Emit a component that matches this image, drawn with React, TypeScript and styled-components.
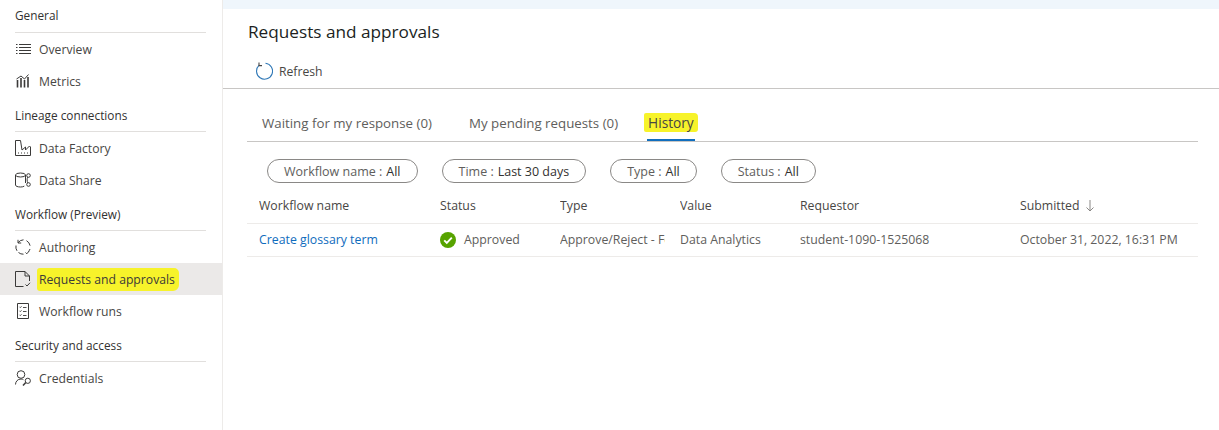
import React from 'react';
import styled, { createGlobalStyle } from 'styled-components';

const GlobalStyle = createGlobalStyle`
  html, body {
    margin: 0;
    padding: 0;
    background: #fff;
  }
  body {
    font-family: 'Open Sans', 'Noto Sans', 'Liberation Sans', sans-serif;
    font-size: 12px;
    color: #323130;
    overflow: hidden;
  }
`;

const Page = styled.div`
  display: flex;
  width: 1219px;
  height: 430px;
`;

const Sidebar = styled.nav`
  width: 223px;
  height: 430px;
  box-sizing: border-box;
  flex-shrink: 0;
  border-right: 1px solid #edebe9;
`;

const SectionTitle = styled.div`
  height: 35px;
  box-sizing: border-box;
  line-height: 20px;
  margin: 0 16px 0 15px;
  padding-top: 8px;
  border-bottom: 1px solid #e1dfdd;
  font-weight: 500;
  font-size: 11.8px;
  color: #323130;

  &:first-child {
    height: 33px;
    padding-top: 5px;
  }
`;

const NavItem = styled.div<{ $active?: boolean }>`
  display: flex;
  align-items: center;
  height: 32px;
  padding-left: 15px;
  gap: 8px;
  font-size: 12.2px;
  color: #484644;
  background: ${(p) => (p.$active ? '#ebe9e8' : 'transparent')};
`;

const IconSlot = styled.svg`
  width: 16px;
  height: 16px;
  flex-shrink: 0;
  fill: none;
  stroke: #3b3a39;
  stroke-width: 1;
`;

const Marker = styled.span`
  background: #f7f32a;
  color: #3b3a39;
  padding: 3px 4px 3px 2px;
  margin-left: -2px;
  border-radius: 3px 5px 6px 3px;
`;

const Main = styled.main`
  flex: 1;
  min-width: 0;
  display: flex;
  flex-direction: column;
`;

const TopStrip = styled.div`
  height: 9px;
  background: #eff6fc;
`;

const Header = styled.div`
  height: 80px;
  box-sizing: border-box;
  padding: 11px 0 0 25px;
  border-bottom: 1px solid #c8c6c4;
`;

const Title = styled.h1`
  margin: 0;
  font-size: 17.2px;
  line-height: 24px;
  font-weight: 500;
  color: #201f1e;
`;

const Toolbar = styled.div`
  display: flex;
  align-items: center;
  gap: 6px;
  margin: 17px 0 0 7px;
  height: 20px;
  font-size: 12.2px;
  color: #484644;
`;

const Content = styled.div`
  padding: 16px 21px 0 24px;
`;

const Tabs = styled.div`
  display: flex;
  height: 36px;
  padding-left: 15px;
  border-bottom: 1px solid #c8c6c4;
`;

const Tab = styled.div<{ $active?: boolean }>`
  position: relative;
  height: 36px;
  line-height: 36px;
  font-size: 13.3px;
  color: #605e5c;
  margin-right: 37px;
  ${(p) =>
    p.$active &&
    `
    margin-left: -8px;
    padding: 0 1px;
    &::after {
      content: '';
      position: absolute;
      left: 0;
      right: 0;
      bottom: 0;
      height: 2px;
      background: #106ebe;
    }
  `}
`;

const TabMarker = styled.span`
  background: #f7f32a;
  color: #484644;
  padding: 0 4px;
  margin: 0 -4px;
  border-radius: 2px 4px 3px 2px;
  font-size: 13.7px;
`;

const Filters = styled.div`
  display: flex;
  gap: 24px;
  margin: 17px 0 0 20px;
`;

const Pill = styled.div`
  display: flex;
  align-items: center;
  height: 22px;
  padding: 0 16px;
  border: 1px solid #8a8886;
  border-radius: 12px;
  font-size: 12.5px;
  color: #605e5c;
`;

const PillValue = styled.span`
  color: #323130;
  font-weight: 500;
  margin-left: 4px;
`;

const Table = styled.div`
  margin-top: 7px;
`;

const Row = styled.div<{ $header?: boolean }>`
  display: grid;
  grid-template-columns: 181px 120px 120px 120px 220px 1fr;
  align-items: center;
  height: ${(p) => (p.$header ? '34px' : '33px')};
  padding-left: 12px;
  padding-bottom: ${(p) => (p.$header ? '2px' : '1px')};
  box-sizing: border-box;
  border-bottom: 1px solid #edebe9;
  font-size: 12.3px;
  color: ${(p) => (p.$header ? '#484644' : '#605e5c')};
  font-weight: ${(p) => (p.$header ? 500 : 400)};
`;

const Cell = styled.div`
  min-width: 0;
  white-space: nowrap;
  overflow: hidden;
  margin-right: 15px;
`;

const LinkText = styled.a`
  color: #0f6cbd;
`;

const StatusCell = styled(Cell)`
  display: flex;
  align-items: center;
  gap: 8px;
`;

const SortArrow = styled.svg`
  width: 10px;
  height: 12px;
  margin-left: 5px;
  vertical-align: -2px;
  fill: none;
  stroke: #8a8886;
`;

const OverviewIcon = () => (
  <IconSlot viewBox="0 0 16 16">
    <path d="M4 3.5h12M4 6.5h12M4 9.5h12M4 12.5h12" />
    <path d="M1 3.5h1.5M1 6.5h1.5M1 9.5h1.5M1 12.5h1.5" />
  </IconSlot>
);

const MetricsIcon = () => (
  <IconSlot viewBox="0 0 16 16">
    <path d="M2.5 14.5V7M6 14.5V5M9.5 14.5V7M13 14.5V4" strokeWidth="1.6" />
    <path d="M1.5 6L6 3l3.5 3L13.5 1.5" />
  </IconSlot>
);

const FactoryIcon = () => (
  <IconSlot viewBox="0 0 16 16">
    <path d="M.5 15.5V.5h5L7 10l3.5-3v3l4-4 1 1v8.500z" />
    <path d="M3 13h1M6 13h1M9 13h1M12 13h1" />
  </IconSlot>
);

const ShareIcon = () => (
  <IconSlot viewBox="0 0 16 16">
    <ellipse cx="5.500" cy="3" rx="5" ry="2" />
    <path d="M.5 3v10c0 1.200 2.200 2 5 2 1.600 0 3-.3 3.800-.9M10.500 3v8" />
    <circle cx="13.500" cy="3.500" r="1.800" />
    <circle cx="13.500" cy="12.500" r="1.800" />
    <path d="M12.800 5.100c-.9 1.500-.9 4 0 5.800" />
  </IconSlot>
);

const AuthoringIcon = () => (
  <IconSlot viewBox="0 0 16 16">
    <path d="M3 3.800A7.200 7.200 0 0 1 8.500.8M3 .8v3.200h3.200" />
    <path d="M11.500 1.700a7.200 7.200 0 0 1 3.600 5" />
    <path d="M15 10a7.200 7.200 0 0 1-1.400 2.400M10.500 13.500l1.300 1.300 2.400-2.800" />
    <path d="M8.500 15.200a7.200 7.200 0 0 1-5-1.700" />
    <path d="M2 11.800A7.200 7.200 0 0 1 1 6.500" />
  </IconSlot>
);

const RequestsIcon = () => (
  <IconSlot viewBox="0 0 16 16">
    <path d="M8.500 15.500h-8V.5H10l4.500 4.500v5" />
    <path d="M10 .5V5h4.500M10.500 13.500l1.500 1.500 3-3.200" />
  </IconSlot>
);

const RunsIcon = () => (
  <IconSlot viewBox="0 0 16 16">
    <path d="M2.500.5h11v15h-11z" />
    <path d="M4.500 3.800l.8.8 1.200-1.300M4.500 7.800l.8.800 1.200-1.300M4.500 11.800l.8.800 1.200-1.300M8 4.500h3.500M8 8.500h3.500M8 12.500h3.500" strokeWidth=".9" />
  </IconSlot>
);

const CredentialsIcon = () => (
  <IconSlot viewBox="0 0 16 16">
    <circle cx="6" cy="4.500" r="3.800" />
    <path d="M.5 14.500c0-3 2.200-5.500 5.500-5.500 1 0 1.700.2 2.400.6" />
    <circle cx="12.800" cy="10.800" r="2.600" />
    <path d="M10.800 12.600L8 15.500" strokeWidth="1.500" />
  </IconSlot>
);

const RefreshIcon = () => (
  <svg width="18" height="18" viewBox="0 0 18 18" fill="none" stroke="#2f78b7" strokeWidth="1.1">
    <path d="M4.200 3.200A8 8 0 1 0 10.500 1.200" />
    <path d="M4 .6v3h3" stroke="#484644" />
  </svg>
);

const ApprovedIcon = () => (
  <svg width="16" height="16" viewBox="0 0 16 16">
    <circle cx="8" cy="8" r="8" fill="#57a300" />
    <path d="M4.200 8.300l2.600 2.600 5-5.200" fill="none" stroke="#fff" strokeWidth="1.900" />
  </svg>
);

const App = () => (
  <>
    <GlobalStyle />
    <Page>
      <Sidebar>
        <SectionTitle>General</SectionTitle>
        <NavItem><OverviewIcon />Overview</NavItem>
        <NavItem><MetricsIcon />Metrics</NavItem>
        <SectionTitle>Lineage connections</SectionTitle>
        <NavItem><FactoryIcon />Data Factory</NavItem>
        <NavItem><ShareIcon />Data Share</NavItem>
        <SectionTitle>Workflow (Preview)</SectionTitle>
        <NavItem><AuthoringIcon />Authoring</NavItem>
        <NavItem $active><RequestsIcon /><Marker>Requests and approvals</Marker></NavItem>
        <NavItem><RunsIcon />Workflow runs</NavItem>
        <SectionTitle>Security and access</SectionTitle>
        <NavItem><CredentialsIcon />Credentials</NavItem>
      </Sidebar>
      <Main>
        <TopStrip />
        <Header>
          <Title>Requests and approvals</Title>
          <Toolbar><RefreshIcon />Refresh</Toolbar>
        </Header>
        <Content>
          <Tabs>
            <Tab>Waiting for my response (0)</Tab>
            <Tab>My pending requests (0)</Tab>
            <Tab $active><TabMarker>History</TabMarker></Tab>
          </Tabs>
          <Filters>
            <Pill>Workflow name :<PillValue>All</PillValue></Pill>
            <Pill>Time :<PillValue>Last 30 days</PillValue></Pill>
            <Pill>Type :<PillValue>All</PillValue></Pill>
            <Pill>Status :<PillValue>All</PillValue></Pill>
          </Filters>
          <Table>
            <Row $header>
              <Cell>Workflow name</Cell>
              <Cell>Status</Cell>
              <Cell>Type</Cell>
              <Cell>Value</Cell>
              <Cell>Requestor</Cell>
              <Cell>
                Submitted
                <SortArrow viewBox="0 0 10 12"><path d="M5 0v11M1.500 7.500L5 11l3.500-3.500" /></SortArrow>
              </Cell>
            </Row>
            <Row>
              <Cell><LinkText>Create glossary term</LinkText></Cell>
              <StatusCell><ApprovedIcon />Approved</StatusCell>
              <Cell>Approve/Reject - Folder</Cell>
              <Cell>Data Analytics</Cell>
              <Cell>student-1090-1525068</Cell>
              <Cell>October 31, 2022, 16:31 PM</Cell>
            </Row>
          </Table>
        </Content>
      </Main>
    </Page>
  </>
);

export default App;
